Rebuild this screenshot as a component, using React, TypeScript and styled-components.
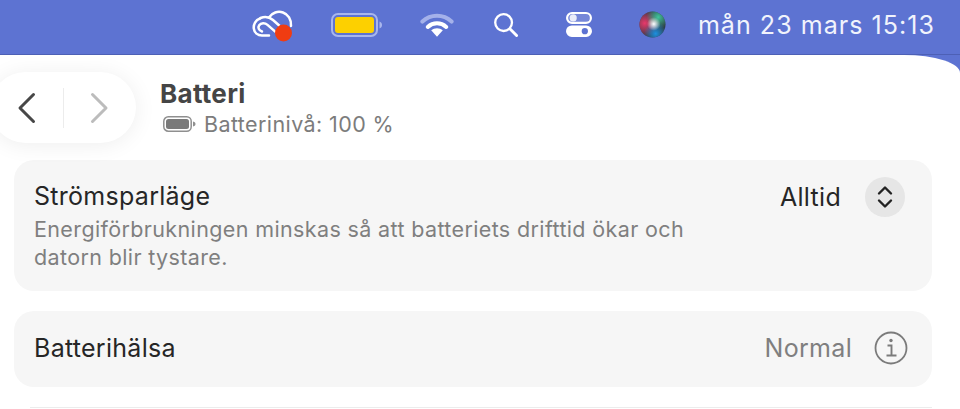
import React from "react";
import styled, { createGlobalStyle } from "styled-components";

const GlobalStyle = createGlobalStyle`
  html, body {
    margin: 0;
    height: 100%;
    overflow: hidden;
    background: #5d73d2;
    font-family: "Inter", "Liberation Sans", sans-serif;
  }
`;

const Page = styled.div`
  width: 960px;
  height: 409px;
  display: flex;
  flex-direction: column;
  overflow: hidden;
`;

const MenuBar = styled.header`
  height: 55px;
  flex: none;
  display: flex;
  align-items: center;
  justify-content: flex-end;
  padding: 0 25px 6px 0;
  box-sizing: border-box;
  box-shadow: inset 0 -1px 0 rgba(50, 60, 130, 0.35);
`;

const MenuIcon = styled.svg<{ $gap: number }>`
  flex: none;
  display: block;
  margin-right: ${(p) => p.$gap}px;
`;

const Clock = styled.span`
  font-size: 25px;
  line-height: 40px;
  letter-spacing: 1.05px;
  color: #f1f3fc;
  white-space: nowrap;
`;

const Window = styled.main`
  flex: 1;
  min-height: 0;
  background: #fff;
  border-top-right-radius: 56px 18px;
  padding: 17px 28px 0 14px;
`;

const TitleBar = styled.div`
  display: flex;
  align-items: flex-start;
  height: 71px;
  margin-bottom: 17px;
`;

const NavPill = styled.div`
  width: 146px;
  height: 71px;
  margin-left: -24px;
  border-radius: 36px;
  background: #fff;
  box-shadow: 0 2px 22px rgba(0, 0, 0, 0.07);
  display: flex;
  align-items: center;
  flex: none;
  padding-left: 27px;
  box-sizing: border-box;
`;

const NavChevron = styled.svg`
  display: block;
  flex: none;
`;

const NavDivider = styled.span`
  width: 1px;
  height: 40px;
  background: #ececec;
  margin: 0 25px 0 26px;
`;

const Heading = styled.div`
  margin-left: 24px;
  padding-top: 7px;
`;

const Title = styled.h1`
  margin: 0;
  font-size: 26px;
  line-height: 30px;
  letter-spacing: 0.3px;
  font-weight: 700;
  color: #454545;
`;

const Status = styled.div`
  display: flex;
  align-items: center;
  gap: 8px;
  padding: 2px 0 0 3px;
  font-size: 21.5px;
  line-height: 26px;
  letter-spacing: 0.4px;
  color: #7c7c7c;
`;

const StatusBattery = styled.svg`
  display: block;
  flex: none;
`;

const Card = styled.section<{ $height: number }>`
  height: ${(p) => p.$height}px;
  box-sizing: border-box;
  background: #f6f6f6;
  border-radius: 20px;
  padding: 0 24px 0 20px;
  margin-bottom: 20px;
  display: flex;
  justify-content: space-between;
`;

const CardText = styled.div`
  padding-top: 20px;
`;

const Label = styled.div`
  font-size: 25px;
  line-height: 32px;
  letter-spacing: 0.28px;
  color: #262626;
`;

const Description = styled.p`
  margin: 3px 0 0;
  width: 680px;
  font-size: 21.5px;
  line-height: 28px;
  letter-spacing: 0.37px;
  color: #7f7f7f;
`;

const SelectControl = styled.div`
  display: flex;
  align-items: center;
  align-self: flex-start;
  margin: 17px 3px 0 0;
`;

const SelectValue = styled.span`
  font-size: 25px;
  line-height: 40px;
  letter-spacing: 0.3px;
  color: #262626;
  margin-right: 24px;
`;

const Stepper = styled.span`
  width: 40px;
  height: 40px;
  border-radius: 50%;
  background: #e6e6e6;
  display: flex;
  align-items: center;
  justify-content: center;
`;

const InfoControl = styled.div`
  display: flex;
  align-items: center;
  align-self: center;
  margin-bottom: 3px;
`;

const Value = styled.span`
  font-size: 25px;
  letter-spacing: 0.3px;
  color: #7f7f7f;
  margin-right: 22px;
`;

const InfoIcon = styled.svg`
  display: block;
  flex: none;
`;

const CenteredLabel = styled(Label)`
  align-self: center;
  margin-bottom: 3px;
`;

const Divider = styled.hr`
  margin: 0 0 0 16px;
  border: 0;
  border-top: 1px solid #ececec;
`;

function CloudIcon() {
  return (
    <MenuIcon $gap={38} width="41" height="35" viewBox="0 -3 41 35">
      <g fill="none" stroke="#fff" strokeWidth="2.5" strokeLinecap="round" strokeLinejoin="round">
        <path d="M17 7.500C20 2.500 26 .8 31 2.500c5 1.700 8.500 7 8 13.500" />
        <path d="M8 8.500C3.500 10 1.300 14.500 1.800 18.500c.5 4.200 4 7 8.200 7h7" />
        <path d="M8.500 8c4.500-1.800 9-1 12.500 2l9 8" />
        <path d="M10 21.500c-3.200-1-4.500-4-2.800-6.300 1.800-2.500 5.800-2.500 8.300-.3l8 7" />
      </g>
      <circle cx="31.500" cy="23" r="8.500" fill="#f03c12" />
    </MenuIcon>
  );
}

function BatteryIcon() {
  return (
    <MenuIcon $gap={38} width="51" height="24" viewBox="0 0 51 24">
      <rect x="1" y="1" width="45" height="22" rx="6" fill="none" stroke="#a9b6ec" strokeWidth="2" />
      <rect x="4" y="4" width="39" height="16" rx="3" fill="#fdd000" />
      <path d="M48.500 8.500c2 .8 2.500 2 2.500 3.500s-.5 2.700-2.500 3.500z" fill="#a9b6ec" />
    </MenuIcon>
  );
}

function WifiIcon() {
  return (
    <MenuIcon $gap={39} width="34" height="26" viewBox="0 0 35 26">
      <path d="M2.500 9.500C11 1.500 24 1.500 32.500 9.500" fill="none" stroke="#a4b1ea" strokeWidth="4.200" strokeLinecap="round" />
      <path d="M8 15c5.500-5 13.500-5 19 0" fill="none" stroke="#fff" strokeWidth="4.200" strokeLinecap="round" />
      <path d="M17.500 25l-6-6.500c3.500-2.800 8.500-2.800 12 0z" fill="#fff" />
    </MenuIcon>
  );
}

function SearchIcon() {
  return (
    <MenuIcon $gap={47} width="26" height="26" viewBox="0 0 27 27">
      <circle cx="11" cy="11" r="8.700" fill="none" stroke="#fff" strokeWidth="2.400" />
      <path d="M17.500 17.500l7 7" stroke="#fff" strokeWidth="3" strokeLinecap="round" />
    </MenuIcon>
  );
}

function ControlsIcon() {
  return (
    <MenuIcon $gap={47} width="26" height="27" viewBox="0 0 29 28">
      <rect x="1.200" y="1.200" width="26.600" height="11" rx="5.500" fill="#fff" fillOpacity="0.15" stroke="#fff" strokeWidth="2.400" />
      <circle cx="8" cy="6.700" r="4" fill="#fff" fillOpacity="0.85" />
      <path fillRule="evenodd" d="M6.500 15h16a6.500 6.500 0 0 1 0 13h-16a6.500 6.500 0 0 1 0-13zM21 18a3.500 3.500 0 0 0 0 7 3.500 3.500 0 0 0 0-7z" fill="#fff" />
    </MenuIcon>
  );
}

function SiriIcon() {
  return (
    <MenuIcon $gap={32} width="27" height="27" viewBox="0 0 28 28">
      <defs>
        <radialGradient id="siri-red" cx="0.2" cy="0.45" r="0.55">
          <stop offset="0" stopColor="#e8386a" />
          <stop offset="1" stopColor="#e8386a" stopOpacity="0" />
        </radialGradient>
        <radialGradient id="siri-green" cx="0.72" cy="0.22" r="0.45">
          <stop offset="0" stopColor="#3fc49a" />
          <stop offset="1" stopColor="#3fc49a" stopOpacity="0" />
        </radialGradient>
        <radialGradient id="siri-blue" cx="0.62" cy="0.85" r="0.45">
          <stop offset="0" stopColor="#1d8fe0" />
          <stop offset="1" stopColor="#1d8fe0" stopOpacity="0" />
        </radialGradient>
        <radialGradient id="siri-core" cx="0.55" cy="0.48" r="0.26">
          <stop offset="0" stopColor="#fff" />
          <stop offset="1" stopColor="#fff" stopOpacity="0" />
        </radialGradient>
      </defs>
      <circle cx="14" cy="14" r="13.500" fill="#2e3a40" />
      <circle cx="14" cy="14" r="13.500" fill="url(#siri-red)" />
      <circle cx="14" cy="14" r="13.500" fill="url(#siri-green)" />
      <circle cx="14" cy="14" r="13.500" fill="url(#siri-blue)" />
      <circle cx="14" cy="14" r="13.500" fill="url(#siri-core)" />
    </MenuIcon>
  );
}

function SmallBattery() {
  return (
    <StatusBattery width="33" height="16" viewBox="0 0 33 16">
      <rect x="0.800" y="0.800" width="27.400" height="14.400" rx="4.500" fill="none" stroke="#8f8f8f" strokeWidth="1.500" />
      <rect x="3" y="3" width="23" height="10" rx="2.500" fill="#7a7a7a" />
      <path d="M30 5.500c2 .6 2.500 1.500 2.500 2.500s-.5 1.900-2.500 2.500z" fill="#8f8f8f" />
    </StatusBattery>
  );
}

export default function App() {
  return (
    <Page>
      <GlobalStyle />
      <MenuBar>
        <CloudIcon />
        <BatteryIcon />
        <WifiIcon />
        <SearchIcon />
        <ControlsIcon />
        <SiriIcon />
        <Clock>mån 23 mars 15:13</Clock>
      </MenuBar>
      <Window>
        <TitleBar>
          <NavPill>
            <NavChevron width="20" height="32" viewBox="0 0 20 32">
              <path d="M16.500 2.500L3 16l13.500 13.500" fill="none" stroke="#474747" strokeWidth="3" strokeLinecap="round" strokeLinejoin="round" />
            </NavChevron>
            <NavDivider />
            <NavChevron width="20" height="32" viewBox="0 0 20 32">
              <path d="M3.500 2.500L17 16 3.500 29.500" fill="none" stroke="#bcbcbc" strokeWidth="3" strokeLinecap="round" strokeLinejoin="round" />
            </NavChevron>
          </NavPill>
          <Heading>
            <Title>Batteri</Title>
            <Status>
              <SmallBattery />
              Batterinivå: 100 %
            </Status>
          </Heading>
        </TitleBar>
        <Card $height={131}>
          <CardText>
            <Label>Strömsparläge</Label>
            <Description>
              Energiförbrukningen minskas så att batteriets drifttid ökar och datorn blir tystare.
            </Description>
          </CardText>
          <SelectControl>
            <SelectValue>Alltid</SelectValue>
            <Stepper>
              <svg width="16" height="28" viewBox="0 0 16 28">
                <path d="M2 10.500L8 4.500l6 6M2 17.500l6 6 6-6" fill="none" stroke="#222" strokeWidth="2.400" strokeLinecap="round" strokeLinejoin="round" />
              </svg>
            </Stepper>
          </SelectControl>
        </Card>
        <Card $height={76}>
          <CenteredLabel>Batterihälsa</CenteredLabel>
          <InfoControl>
            <Value>Normal</Value>
            <InfoIcon width="34" height="34" viewBox="0 0 34 34">
              <circle cx="17" cy="17" r="15.500" fill="none" stroke="#7b7b7b" strokeWidth="1.800" />
              <circle cx="17" cy="9.500" r="1.700" fill="#7b7b7b" />
              <path d="M13.500 14.500H17.500V24M12.500 24.500h10" fill="none" stroke="#7b7b7b" strokeWidth="1.900" />
            </InfoIcon>
          </InfoControl>
        </Card>
        <Divider />
      </Window>
    </Page>
  );
}
